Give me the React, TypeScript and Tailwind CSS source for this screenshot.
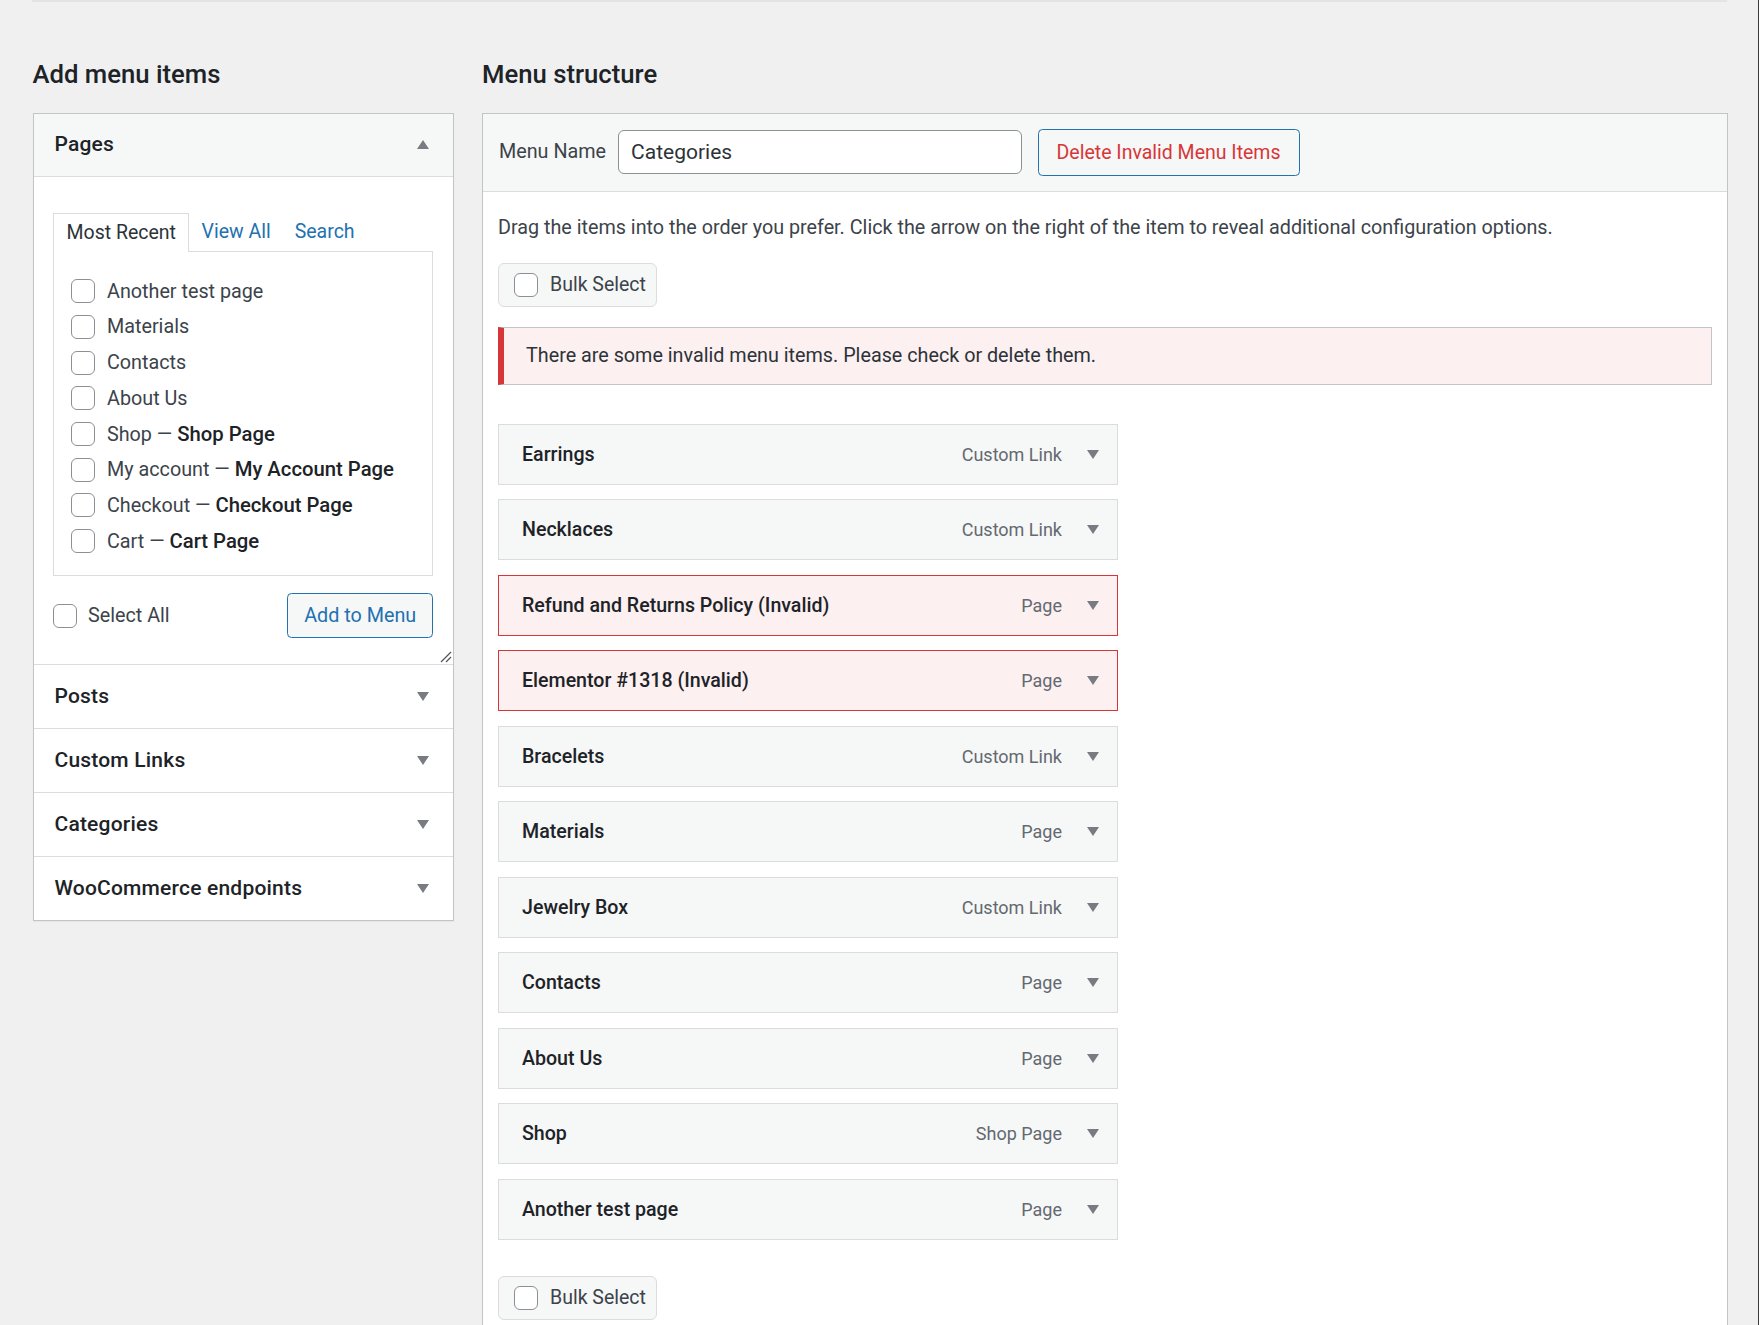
import React from "react";

function Check() {
  return <span className="block w-[24px] h-[24px] shrink-0 rounded-[6px] border-[1.5px] border-[#8c8f94] bg-white" />;
}

function ArrowDown() {
  return (
    <svg width="12" height="9" viewBox="0 0 12 9" className="shrink-0">
      <polygon points="0,0 12,0 6,9" fill="#787c82" />
    </svg>
  );
}

function ArrowUp() {
  return (
    <svg width="12" height="9" viewBox="0 0 12 9" className="shrink-0">
      <polygon points="0,9 12,9 6,0" fill="#787c82" />
    </svg>
  );
}

const pages: { a: string; b?: string }[] = [
  { a: "Another test page" },
  { a: "Materials" },
  { a: "Contacts" },
  { a: "About Us" },
  { a: "Shop", b: "Shop Page" },
  { a: "My account", b: "My Account Page" },
  { a: "Checkout", b: "Checkout Page" },
  { a: "Cart", b: "Cart Page" },
];

const items: { t: string; type: string; invalid?: boolean }[] = [
  { t: "Earrings", type: "Custom Link" },
  { t: "Necklaces", type: "Custom Link" },
  { t: "Refund and Returns Policy (Invalid)", type: "Page", invalid: true },
  { t: "Elementor #1318 (Invalid)", type: "Page", invalid: true },
  { t: "Bracelets", type: "Custom Link" },
  { t: "Materials", type: "Page" },
  { t: "Jewelry Box", type: "Custom Link" },
  { t: "Contacts", type: "Page" },
  { t: "About Us", type: "Page" },
  { t: "Shop", type: "Shop Page" },
  { t: "Another test page", type: "Page" },
];

const sections = ["Posts", "Custom Links", "Categories", "WooCommerce endpoints"];

export default function App() {
  return (
    <div className="relative w-full h-[1325px] overflow-hidden bg-[#f0f0f1] font-['Roboto',sans-serif] text-[#3c434a] border-r-[1.5px] border-[#3a3a3a]">
      <div className="ml-[32px] mr-[31px] h-[2px] bg-[#e4e4e5]" />
      <div className="flex pl-[32.5px] pt-[55px] gap-[28.5px]">
        {/* Left column */}
        <div className="w-[421px] shrink-0">
          <h2 className="h-[34px] leading-[34px] text-[25.7px] font-medium text-[#1d2327] mb-[21.5px]">Add menu items</h2>
          <div className="border border-[#c3c4c7] bg-white shadow-[0_1px_1px_rgba(0,0,0,0.04)]">
            <div className="h-[63px] bg-[#f6f7f7] border-b border-[#dcdcde] flex items-center justify-between pl-[21px] pr-[24px]">
              <span className="text-[21px] tracking-[0.2px] font-medium text-[#1d2327]">Pages</span>
              <ArrowUp />
            </div>
            <div className="relative pt-[36px] pl-[19.5px] pr-[19.3px] pb-[26px]">
              <div className="flex items-end h-[38px]">
                <div className="relative z-10 -mb-px h-[39px] flex items-center px-[12.5px] border-t border-l border-r border-[#dcdcde] bg-white text-[19.5px] text-[#2c3338]">
                  Most Recent
                </div>
                <span className="h-[38px] flex items-center px-[12px] text-[19.5px] text-[#2271b1]">View All</span>
                <span className="h-[38px] flex items-center px-[12px] text-[19.5px] text-[#2271b1]">Search</span>
              </div>
              <div className="border border-[#dcdcde] pt-[22px] pb-[16px] pl-[17px]">
                {pages.map((p) => (
                  <div key={p.a} className="h-[35.7px] flex items-center gap-[12px] text-[19.75px]">
                    <Check />
                    <span>
                      {p.a}
                      {p.b ? (
                        <>
                          {" — "}
                          <span className="font-medium text-[20.3px] text-[#1d2327]">{p.b}</span>
                        </>
                      ) : null}
                    </span>
                  </div>
                ))}
              </div>
              <div className="mt-[17px] h-[45px] flex items-center justify-between">
                <div className="flex items-center gap-[11px] text-[19.75px]">
                  <Check />
                  <span>Select All</span>
                </div>
                <div className="w-[146px] h-[45px] flex items-center justify-center border border-[#2271b1] rounded-[4.5px] bg-[#f6f7f7] text-[19.75px] text-[#2271b1]">
                  Add to Menu
                </div>
              </div>
              <svg width="12" height="12" viewBox="0 0 12 12" className="absolute right-[1px] bottom-[1px]">
                <line x1="1" y1="11" x2="11" y2="1" stroke="#50575e" strokeWidth="1.3" />
                <line x1="6" y1="11" x2="11" y2="6" stroke="#50575e" strokeWidth="1.3" />
              </svg>
            </div>
            {sections.map((s) => (
              <div key={s} className="h-[64px] border-t border-[#dcdcde] flex items-center justify-between pl-[21px] pr-[24px]">
                <span className="text-[21px] tracking-[0.2px] font-medium text-[#1d2327]">{s}</span>
                <ArrowDown />
              </div>
            ))}
          </div>
        </div>

        {/* Right column */}
        <div className="w-[1246px] shrink-0">
          <h2 className="h-[34px] leading-[34px] text-[25.7px] font-medium text-[#1d2327] mb-[21.5px]">Menu structure</h2>
          <div className="border border-[#c3c4c7] bg-white">
            <div className="h-[78.5px] bg-[#f6f7f7] border-b border-[#dcdcde] flex items-center pl-[16px]">
              <span className="text-[19.75px] mr-[12px]">Menu Name</span>
              <div className="w-[404px] h-[44px] flex items-center px-[12px] border border-[#8c8f94] rounded-[6px] bg-white text-[21px] text-[#2c3338]">
                Categories
              </div>
              <div className="ml-[15.5px] w-[262px] h-[47px] flex items-center justify-center border border-[#2271b1] rounded-[4.5px] bg-[#f6f7f7] text-[19.5px] text-[#d63638]">
                Delete Invalid Menu Items
              </div>
            </div>
            <div className="pl-[15px] pr-[14.7px] pt-[20.7px] pb-[40px]">
              <p className="h-[30px] leading-[30px] text-[19.75px]">
                Drag the items into the order you prefer. Click the arrow on the right of the item to reveal additional configuration options.
              </p>
              <div className="mt-[20px] w-[159px] h-[44px] flex items-center gap-[12px] pl-[15px] border border-[#dcdcde] rounded-[6px] bg-[#f6f7f7] text-[19.5px]">
                <Check />
                <span>Bulk Select</span>
              </div>
              <div className="mt-[20.3px] h-[58.3px] flex items-center pl-[22px] border border-[#c3c4c7] border-l-[6px] border-l-[#d63638] bg-[#fcf0f1] text-[19.75px] text-[#2c3338]">
                There are some invalid menu items. Please check or delete them.
              </div>
              <div className="mt-[38.7px] flex flex-col gap-[14.5px]">
                {items.map((it) => (
                  <div
                    key={it.t}
                    className={
                      "w-[619.5px] h-[61px] flex items-center justify-between pl-[23px] pr-[18px] border " +
                      (it.invalid ? "bg-[#fcf0f1] border-[#d63638]" : "bg-[#f6f7f7] border-[#dcdcde]")
                    }
                  >
                    <span className="text-[19.6px] font-medium text-[#1d2327]">{it.t}</span>
                    <div className="flex items-center gap-[24.5px]">
                      <span className="text-[18px] text-[#646970]">{it.type}</span>
                      <ArrowDown />
                    </div>
                  </div>
                ))}
              </div>
              <div className="mt-[36px] w-[159px] h-[44px] flex items-center gap-[12px] pl-[15px] border border-[#dcdcde] rounded-[6px] bg-[#f6f7f7] text-[19.5px]">
                <Check />
                <span>Bulk Select</span>
              </div>
            </div>
          </div>
        </div>
      </div>
    </div>
  );
}
